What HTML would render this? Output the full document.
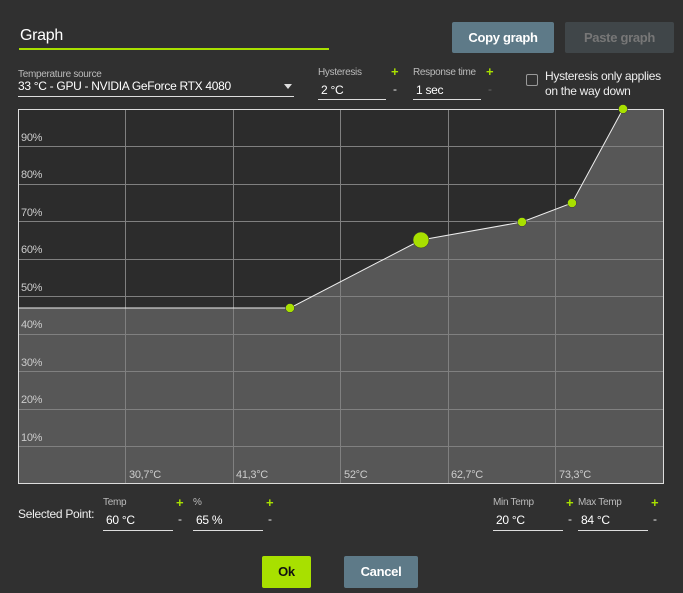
<!DOCTYPE html>
<html><head><style>
body{margin:0;width:683px;height:593px;background:#303030;font-family:"Liberation Sans",sans-serif;color:#eee;position:relative;overflow:hidden;letter-spacing:-0.3px}
.a{position:absolute}
.lbl{font-size:10px;color:#bbb}
.in{border-bottom:1px solid #ddd;font-size:12px;color:#fff}
.plus{color:#a8e000;font-weight:bold;font-size:13px}
.btn{position:absolute;border-radius:2px;font-size:13px;font-weight:bold;text-align:center}
</style></head><body>
<div class="a" style="left:20px;top:27px;font-size:16px;color:#fff">Graph</div>
<div class="a" style="left:19px;top:48px;width:310px;height:2px;background:#a8e000"></div>
<div class="btn" style="left:452px;top:22px;width:102px;height:31px;line-height:31px;background:#5e7a88;color:#fff">Copy graph</div>
<div class="btn" style="left:565px;top:22px;width:109px;height:31px;line-height:31px;background:#404649;color:#777">Paste graph</div>

<div class="a lbl" style="left:18px;top:69px">Temperature source</div>
<div class="a in" style="left:18px;top:79px;width:276px;height:17px">33 °C - GPU - NVIDIA GeForce RTX 4080</div>
<div class="a" style="left:284px;top:84px;width:0;height:0;border-left:4px solid transparent;border-right:4px solid transparent;border-top:5px solid #ddd"></div>
<div class="a lbl" style="left:318px;top:67px">Hysteresis</div>
<div class="a plus" style="left:391px;top:64px">+</div>
<div class="a in" style="left:318px;top:83px;width:68px;height:16px">&nbsp;2 °C</div>
<div class="a" style="left:393px;top:82px;font-size:12px">-</div>
<div class="a lbl" style="left:413px;top:67px">Response time</div>
<div class="a plus" style="left:486px;top:64px">+</div>
<div class="a in" style="left:413px;top:83px;width:68px;height:16px">&nbsp;1 sec</div>
<div class="a" style="left:488px;top:82px;font-size:12px;color:#666">-</div>
<div class="a" style="left:526px;top:74px;width:10px;height:10px;border:1.5px solid #999;border-radius:2px"></div>
<div class="a" style="left:545px;top:69px;font-size:12px;line-height:15px">Hysteresis only applies<br>on the way down</div>

<svg class="a" style="left:0;top:0" width="683" height="593">
<rect x="18" y="109" width="646" height="375" fill="#2c2c2c"/>
<polygon points="18,308 290,308 421,240 522,222 572,203 623,109 664,109 664,484 18,484" fill="#575757"/>
<g stroke="#808080" stroke-width="1">
<line x1="125.5" y1="109" x2="125.5" y2="484"/><line x1="233.5" y1="109" x2="233.5" y2="484"/><line x1="340.5" y1="109" x2="340.5" y2="484"/><line x1="448.5" y1="109" x2="448.5" y2="484"/><line x1="555.5" y1="109" x2="555.5" y2="484"/>
<line x1="18" y1="146.5" x2="664" y2="146.5"/><line x1="18" y1="184.5" x2="664" y2="184.5"/><line x1="18" y1="221.5" x2="664" y2="221.5"/><line x1="18" y1="259.5" x2="664" y2="259.5"/><line x1="18" y1="296.5" x2="664" y2="296.5"/><line x1="18" y1="334.5" x2="664" y2="334.5"/><line x1="18" y1="371.5" x2="664" y2="371.5"/><line x1="18" y1="409.5" x2="664" y2="409.5"/><line x1="18" y1="446.5" x2="664" y2="446.5"/>
</g>
<rect x="18.5" y="109.5" width="645" height="374" fill="none" stroke="#ddd"/>
<polyline points="18,308 290,308 421,240 522,222 572,203 623,109" fill="none" stroke="#eee" stroke-width="1"/>
<g fill="#a8e000" stroke="#333" stroke-width="0.5">
<circle cx="290" cy="308" r="4.5"/><circle cx="421" cy="240" r="8"/><circle cx="522" cy="222" r="4.5"/><circle cx="572" cy="203" r="4.5"/><circle cx="623" cy="109" r="4.5"/></g>
<g font-family="Liberation Sans" font-size="11" fill="#ccc" letter-spacing="-0.3">
<text x="21" y="141">90%</text><text x="21" y="178">80%</text><text x="21" y="216">70%</text><text x="21" y="253">60%</text><text x="21" y="291">50%</text><text x="21" y="328">40%</text><text x="21" y="366">30%</text><text x="21" y="403">20%</text><text x="21" y="441">10%</text>
<text x="129" y="478">30,7°C</text><text x="236" y="478">41,3°C</text><text x="344" y="478">52°C</text><text x="451" y="478">62,7°C</text><text x="559" y="478">73,3°C</text>
</g></svg>

<div class="a" style="left:18px;top:507px;font-size:12px">Selected Point:</div>
<div class="a lbl" style="left:103px;top:497px">Temp</div><div class="a plus" style="left:176px;top:495px">+</div>
<div class="a in" style="left:103px;top:513px;width:70px;height:17px">&nbsp;60 °C</div><div class="a" style="left:178px;top:512px;font-size:12px">-</div>
<div class="a lbl" style="left:193px;top:497px">%</div><div class="a plus" style="left:266px;top:495px">+</div>
<div class="a in" style="left:193px;top:513px;width:70px;height:17px">&nbsp;65 %</div><div class="a" style="left:268px;top:512px;font-size:12px">-</div>
<div class="a lbl" style="left:493px;top:497px">Min Temp</div><div class="a plus" style="left:566px;top:495px">+</div>
<div class="a in" style="left:493px;top:513px;width:70px;height:17px">&nbsp;20 °C</div><div class="a" style="left:568px;top:512px;font-size:12px">-</div>
<div class="a lbl" style="left:578px;top:497px">Max Temp</div><div class="a plus" style="left:651px;top:495px">+</div>
<div class="a in" style="left:578px;top:513px;width:70px;height:17px">&nbsp;84 °C</div><div class="a" style="left:653px;top:512px;font-size:12px">-</div>

<div class="btn" style="left:262px;top:556px;width:49px;height:32px;line-height:32px;background:#a8e000;color:#111">Ok</div>
<div class="btn" style="left:344px;top:556px;width:74px;height:32px;line-height:32px;background:#5e7a88;color:#fff">Cancel</div>
</body></html>
